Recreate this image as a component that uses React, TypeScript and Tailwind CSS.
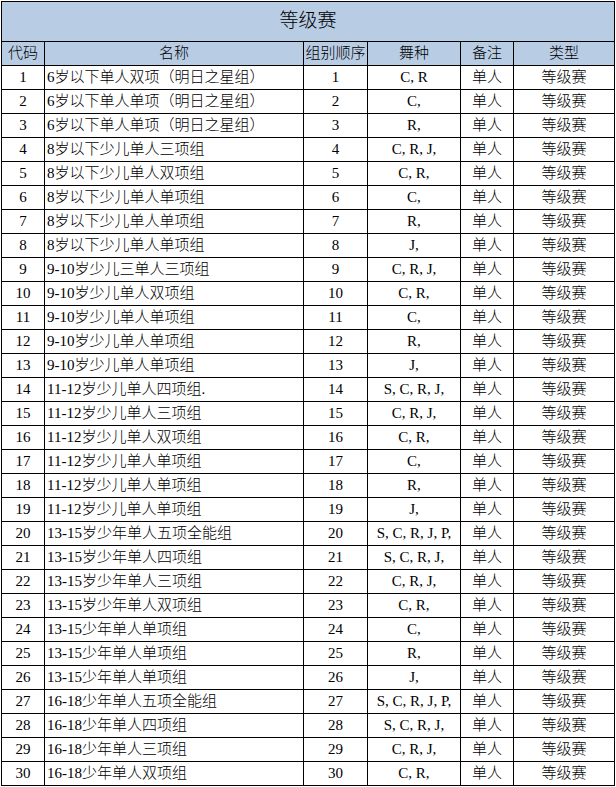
import React from "react";

type Row = [string, string, string];

const rows: Row[] = [
  ["6岁以下单人双项（明日之星组）", "1", "C, R"],
  ["6岁以下单人单项（明日之星组）", "2", "C,"],
  ["6岁以下单人单项（明日之星组）", "3", "R,"],
  ["8岁以下少儿单人三项组", "4", "C, R, J,"],
  ["8岁以下少儿单人双项组", "5", "C, R,"],
  ["8岁以下少儿单人单项组", "6", "C,"],
  ["8岁以下少儿单人单项组", "7", "R,"],
  ["8岁以下少儿单人单项组", "8", "J,"],
  ["9-10岁少儿三单人三项组", "9", "C, R, J,"],
  ["9-10岁少儿单人双项组", "10", "C, R,"],
  ["9-10岁少儿单人单项组", "11", "C,"],
  ["9-10岁少儿单人单项组", "12", "R,"],
  ["9-10岁少儿单人单项组", "13", "J,"],
  ["11-12岁少儿单人四项组.", "14", "S, C, R, J,"],
  ["11-12岁少儿单人三项组", "15", "C, R, J,"],
  ["11-12岁少儿单人双项组", "16", "C, R,"],
  ["11-12岁少儿单人单项组", "17", "C,"],
  ["11-12岁少儿单人单项组", "18", "R,"],
  ["11-12岁少儿单人单项组", "19", "J,"],
  ["13-15岁少年单人五项全能组", "20", "S, C, R, J, P,"],
  ["13-15岁少年单人四项组", "21", "S, C, R, J,"],
  ["13-15岁少年单人三项组", "22", "C, R, J,"],
  ["13-15岁少年单人双项组", "23", "C, R,"],
  ["13-15少年单人单项组", "24", "C,"],
  ["13-15少年单人单项组", "25", "R,"],
  ["13-15少年单人单项组", "26", "J,"],
  ["16-18少年单人五项全能组", "27", "S, C, R, J, P,"],
  ["16-18少年单人四项组", "28", "S, C, R, J,"],
  ["16-18少年单人三项组", "29", "C, R, J,"],
  ["16-18少年单人双项组", "30", "C, R,"],
];

const headers = ["代码", "名称", "组别顺序", "舞种", "备注", "类型"];

const cell = "h-6 border-r border-b border-black flex items-center leading-none";

export default function App() {
  return (
    <div
      className="w-[616px] h-[787px] bg-white pl-[1px] pt-[1px] text-black text-[15px] font-light"
      style={{ fontFamily: '"Liberation Serif", "Noto Sans CJK SC", serif' }}
    >
      <div className="w-[614px] border-l border-t border-black">
        <div className="h-[40px] border-r border-b border-black bg-[#b8cce4] flex items-center justify-center text-[19px]">
          等级赛
        </div>
        <div className="grid grid-cols-[43px_259px_64px_93px_53px_101px]">
          {headers.map((h) => (
            <div key={h} className={`${cell} justify-center bg-[#b8cce4] whitespace-nowrap`}>
              {h}
            </div>
          ))}
          {rows.map(([name, order, dance], i) => (
            <React.Fragment key={i}>
              <div className={`${cell} justify-center`}>{i + 1}</div>
              <div className={`${cell} pl-[2px] whitespace-nowrap`}>{name}</div>
              <div className={`${cell} justify-center`}>{order}</div>
              <div className={`${cell} justify-center whitespace-nowrap`}>{dance}</div>
              <div className={`${cell} justify-center`}>单人</div>
              <div className={`${cell} justify-center`}>等级赛</div>
            </React.Fragment>
          ))}
        </div>
      </div>
    </div>
  );
}
